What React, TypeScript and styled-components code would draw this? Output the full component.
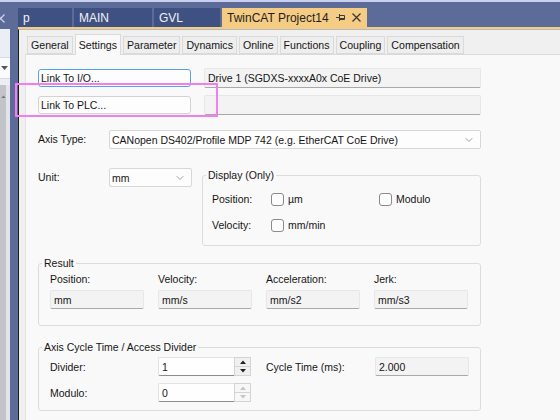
import styled, { createGlobalStyle } from 'styled-components';
import { ChevronDown } from 'lucide-react';

const GlobalStyle = createGlobalStyle`
  html, body {
    margin: 0;
    padding: 0;
    background: #5d6b99;
  }
  body {
    font-family: "Liberation Sans", Arial, sans-serif;
  }
`;

const Window = styled.div`
  position: relative;
  width: 560px;
  height: 420px;
  overflow: hidden;
  display: flex;
  flex-direction: column;
  background: #5d6b99;
  font-family: "Liberation Sans", Arial, sans-serif;
  font-size: 10.5px;
  color: #151515;
`;

const TopEdge = styled.div`
  flex: none;
  height: 2px;
  background: #c9d1ee;
`;

const Main = styled.div`
  flex: 1;
  display: flex;
  min-height: 0;
`;

const SidePanel = styled.div`
  flex: none;
  width: 10px;
  display: flex;
  flex-direction: column;
  overflow: hidden;
`;

const SideHead = styled.div`
  flex: none;
  height: 27px;
  padding-top: 11px;
  box-sizing: border-box;
  margin-left: -4px;
`;

const SideTools = styled.div`
  flex: none;
  height: 56px;
  background: #eceef5;
  display: flex;
  flex-direction: column;
  justify-content: flex-end;
  padding-bottom: 6px;
  box-sizing: border-box;
`;

const SideCombo = styled.div`
  height: 20px;
  background: #fbfbfd;
  border-top: 1px solid #d7dae6;
  border-bottom: 1px solid #d7dae6;
  display: flex;
  align-items: center;
  justify-content: flex-end;
  padding-right: 2px;
  color: #555;
`;

const SideScroll = styled.div`
  flex: 1;
  background: linear-gradient(to right, #c3c4ca 0 6px, #e3e4e9 6px);
  color: #777;
  padding: 3px 0 0 1px;
`;

const DocColumn = styled.div`
  flex: 1;
  margin-left: 8px;
  display: flex;
  flex-direction: column;
  min-width: 0;
`;

const DocTabs = styled.div`
  flex: none;
  display: flex;
  gap: 2px;
  height: 19px;
  margin-top: 6px;
`;

const DocTab = styled.div<{ $active?: boolean; $width: number }>`
  flex: none;
  width: ${(p) => p.$width}px;
  display: flex;
  align-items: center;
  gap: 6px;
  padding: 0 6px 0 5px;
  box-sizing: border-box;
  font-size: 12px;
  background: ${(p) => (p.$active ? '#f5cc84' : '#3f5183')};
  color: ${(p) => (p.$active ? '#1e1e1e' : '#f2f2f2')};
`;

const TabTitle = styled.span`
  flex: 1;
  white-space: nowrap;
`;

const ActiveLine = styled.div`
  flex: none;
  height: 2px;
  background: #f5cc84;
`;

const DocBody = styled.div`
  flex: 1;
  display: flex;
  flex-direction: column;
  background: #f0f0f0;
  border-left: 1px solid #1b1b1b;
  border-top: 1px solid #b9b9b9;
  min-height: 0;
`;

const PropTabs = styled.div`
  flex: none;
  display: flex;
  align-items: flex-end;
  gap: 2px;
  padding: 3px 0 0 8px;
  height: 24px;
  box-sizing: border-box;
  position: relative;
  z-index: 1;
`;

const PropTab = styled.div<{ $active?: boolean }>`
  height: ${(p) => (p.$active ? 21 : 18)}px;
  margin-bottom: ${(p) => (p.$active ? -1 : 0)}px;
  padding: 0 3px;
  display: flex;
  align-items: center;
  font-size: 10.6px;
  background: ${(p) => (p.$active ? '#f9f9f9' : '#eeeeee')};
  border: 1px solid #dadada;
  border-bottom: ${(p) => (p.$active ? 'none' : '1px solid #dadada')};
  box-sizing: border-box;
  white-space: nowrap;
`;

const Panel = styled.div`
  flex: 1;
  margin-left: 6px;
  background: #f9f9f9;
  border-top: 1px solid #dadada;
  border-left: 1px solid #e2e2e2;
  padding: 13px 0 0 12px;
`;

const Form = styled.div`
  width: 443px;
  display: flex;
  flex-direction: column;
`;

const LinkGrid = styled.div`
  display: grid;
  grid-template-columns: 153px 277px;
  grid-auto-rows: 20px;
  column-gap: 13px;
  row-gap: 7px;
  align-items: center;
`;

const LinkButton = styled.div<{ $focused?: boolean }>`
  height: 18px;
  display: flex;
  align-items: center;
  padding: 0 2px;
  box-sizing: border-box;
  background: #fdfdfd;
  border: 1px solid ${(p) => (p.$focused ? '#5aa2e6' : '#d3d3d3')};
  border-radius: 3px;
`;

const ReadField = styled.div<{ $h?: number }>`
  height: ${(p) => p.$h ?? 19}px;
  display: flex;
  align-items: center;
  padding: 0 3px;
  box-sizing: border-box;
  background: #f3f3f3;
  border: 1px solid #e7e7e7;
  border-bottom-color: #a9a9a9;
  border-radius: 2px;
  white-space: nowrap;
`;

const FieldRow = styled.div<{ $top: number; $cols: string }>`
  display: grid;
  grid-template-columns: ${(p) => p.$cols};
  align-items: start;
  margin-top: ${(p) => p.$top}px;
`;

const Label = styled.span`
  line-height: 19px;
  white-space: nowrap;
`;

const Select = styled.div`
  height: 19px;
  display: flex;
  align-items: center;
  justify-content: space-between;
  padding: 0 5px 0 2px;
  box-sizing: border-box;
  background: #fdfdfd;
  border: 1px solid #d7d7d7;
  border-radius: 2px;
  white-space: nowrap;

  svg {
    color: #777;
    flex: none;
  }
`;

const GroupBox = styled.div<{ $top: number; $pad: string }>`
  position: relative;
  margin-top: ${(p) => p.$top}px;
  padding: ${(p) => p.$pad};
  border: 1px solid #dcdcdc;
  border-radius: 3px;
`;

const GroupTitle = styled.span`
  position: absolute;
  top: -7px;
  left: 3px;
  padding: 0 2px;
  line-height: 12px;
  background: #f9f9f9;
  white-space: nowrap;
`;

const DisplayRows = styled.div`
  display: grid;
  grid-template-columns: 59px 108px auto;
  grid-auto-rows: 20px;
  row-gap: 6px;
  align-items: center;
`;

const Check = styled.span`
  display: flex;
  align-items: center;
  gap: 4px;
  white-space: nowrap;
`;

const Box = styled.span`
  width: 13px;
  height: 13px;
  box-sizing: border-box;
  border: 1px solid #8a8a8a;
  border-radius: 3px;
  background: #fdfdfd;
`;

const ResultGrid = styled.div`
  display: grid;
  grid-template-columns: repeat(4, 94px);
  grid-template-rows: 12px 19px;
  column-gap: 14px;
  row-gap: 5px;
  align-items: center;
`;

const CycleGrid = styled.div`
  display: grid;
  grid-template-columns: 108px 93px 124px 94px;
  grid-auto-rows: 19px;
  row-gap: 7px;
  align-items: center;
`;

const CycleLabel = styled.span`
  padding-left: 15px;
  white-space: nowrap;
`;

const SpinBox = styled.div`
  display: flex;
  height: 19px;
`;

const SpinField = styled.div`
  flex: 1;
  display: flex;
  align-items: center;
  padding: 0 3px;
  background: #fefefe;
  border: 1px solid #e2e2e2;
  border-bottom-color: #8d8d8d;
  border-right: none;
  border-radius: 2px 0 0 2px;
`;

const Spinner = styled.div`
  flex: none;
  width: 17px;
  display: flex;
  flex-direction: column;
`;

const SpinButton = styled.div<{ $disabled?: boolean }>`
  flex: 1;
  display: flex;
  align-items: center;
  justify-content: center;
  background: ${(p) => (p.$disabled ? '#f7f7f7' : '#f0f0f0')};
  border: 1px solid #d4d4d4;
  color: ${(p) => (p.$disabled ? '#c4c4c4' : '#222')};

  & + & {
    border-top: none;
  }
`;

const Highlight = styled.div`
  position: absolute;
  left: 15px;
  top: 83px;
  width: 203px;
  height: 34px;
  box-sizing: border-box;
  border: 2px solid #f47ef0;
  pointer-events: none;
`;

const PinIcon = () => (
  <svg width="10" height="9" viewBox="0 0 10 9" fill="none" stroke="#3a3a3a" strokeWidth="1">
    <path d="M0 4.5h3.5M3.5 1v7M3.5 2.5h5v4h-5M3.5 5.5h5" />
  </svg>
);

const CloseIcon = ({ color = '#3a3a3a' }: { color?: string }) => (
  <svg width="9" height="9" viewBox="0 0 9 9" fill="none" stroke={color} strokeWidth="1.3">
    <path d="M0.5 0.5l8 8M8.5 0.5l-8 8" />
  </svg>
);

const Arrow = ({ up, size = 6 }: { up?: boolean; size?: number }) => (
  <svg width={size} height={(size * 2) / 3} viewBox="0 0 6 4" fill="currentColor">
    <path d={up ? 'M0 4L3 0.5L6 4Z' : 'M0 0L3 3.5L6 0Z'} />
  </svg>
);

const Spin = ({ value, disabled }: { value: string; disabled?: boolean }) => (
  <SpinBox>
    <SpinField>{value}</SpinField>
    <Spinner>
      <SpinButton $disabled={disabled}>
        <Arrow up />
      </SpinButton>
      <SpinButton $disabled={disabled}>
        <Arrow />
      </SpinButton>
    </Spinner>
  </SpinBox>
);

const propTabs = ['General', 'Settings', 'Parameter', 'Dynamics', 'Online', 'Functions', 'Coupling', 'Compensation'];

const results = [
  { label: 'Position:', unit: 'mm' },
  { label: 'Velocity:', unit: 'mm/s' },
  { label: 'Acceleration:', unit: 'mm/s2' },
  { label: 'Jerk:', unit: 'mm/s3' },
];

export default function App() {
  return (
    <Window>
      <GlobalStyle />
      <TopEdge />
      <Main>
        <SidePanel>
          <SideHead>
            <CloseIcon color="#c9d1ee" />
          </SideHead>
          <SideTools>
            <SideCombo>
              <Arrow size={7} />
            </SideCombo>
          </SideTools>
          <SideScroll>
            <Arrow up size={5} />
          </SideScroll>
        </SidePanel>
        <DocColumn>
          <DocTabs>
            <DocTab $width={54}>
              <TabTitle>p</TabTitle>
            </DocTab>
            <DocTab $width={78}>
              <TabTitle>MAIN</TabTitle>
            </DocTab>
            <DocTab $width={66}>
              <TabTitle>GVL</TabTitle>
            </DocTab>
            <DocTab $active $width={145}>
              <TabTitle>TwinCAT Project14</TabTitle>
              <PinIcon />
              <CloseIcon />
            </DocTab>
          </DocTabs>
          <ActiveLine />
          <DocBody>
            <PropTabs>
              {propTabs.map((t) => (
                <PropTab key={t} $active={t === 'Settings'}>
                  {t}
                </PropTab>
              ))}
            </PropTabs>
            <Panel>
              <Form>
                <LinkGrid>
                  <LinkButton $focused>Link To I/O...</LinkButton>
                  <ReadField $h={20}>Drive 1 (SGDXS-xxxxA0x CoE Drive)</ReadField>
                  <LinkButton>Link To PLC...</LinkButton>
                  <ReadField $h={20} />
                </LinkGrid>

                <FieldRow $top={15} $cols="71px 372px">
                  <Label>Axis Type:</Label>
                  <Select>
                    CANopen DS402/Profile MDP 742 (e.g. EtherCAT CoE Drive)
                    <ChevronDown size={12} strokeWidth={1.4} />
                  </Select>
                </FieldRow>

                <FieldRow $top={19} $cols="71px 83px 10px 279px">
                  <Label>Unit:</Label>
                  <Select>
                    mm
                    <ChevronDown size={12} strokeWidth={1.4} />
                  </Select>
                  <span />
                  <GroupBox $top={7} $pad="13px 0 10px 9px">
                    <GroupTitle>Display (Only)</GroupTitle>
                    <DisplayRows>
                      <span>Position:</span>
                      <Check>
                        <Box />
                        µm
                      </Check>
                      <Check>
                        <Box />
                        Modulo
                      </Check>
                      <span>Velocity:</span>
                      <Check>
                        <Box />
                        mm/min
                      </Check>
                    </DisplayRows>
                  </GroupBox>
                </FieldRow>

                <GroupBox $top={17} $pad="9px 12px 16px 11px">
                  <GroupTitle>Result</GroupTitle>
                  <ResultGrid>
                    {results.map((r) => (
                      <span key={r.label}>{r.label}</span>
                    ))}
                    {results.map((r) => (
                      <ReadField key={r.unit}>{r.unit}</ReadField>
                    ))}
                  </ResultGrid>
                </GroupBox>

                <GroupBox $top={21} $pad="9px 12px 8px 11px">
                  <GroupTitle>Axis Cycle Time / Access Divider</GroupTitle>
                  <CycleGrid>
                    <span>Divider:</span>
                    <Spin value="1" />
                    <CycleLabel>Cycle Time (ms):</CycleLabel>
                    <ReadField>2.000</ReadField>
                    <span>Modulo:</span>
                    <Spin value="0" disabled />
                  </CycleGrid>
                </GroupBox>
              </Form>
            </Panel>
          </DocBody>
        </DocColumn>
      </Main>
      <Highlight />
    </Window>
  );
}
